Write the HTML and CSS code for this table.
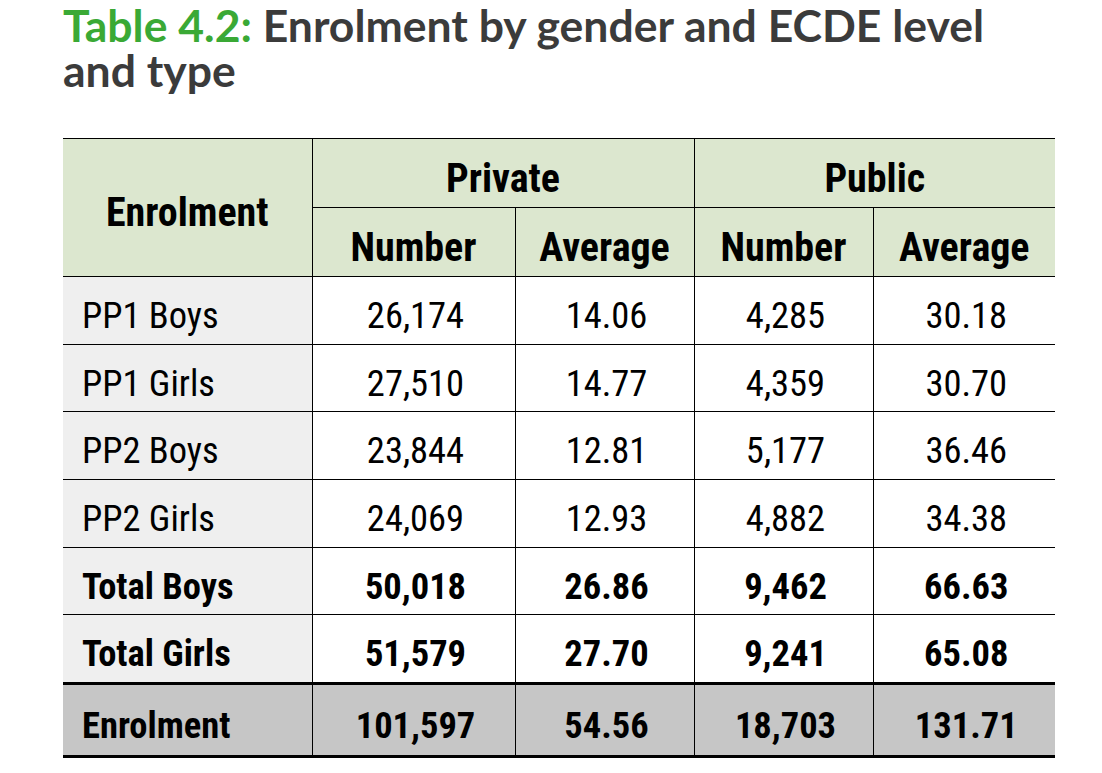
FILE: index.html
```html
<!DOCTYPE html>
<html lang="en">
<head>
<meta charset="utf-8">
<title>Table 4.2</title>
<link rel="stylesheet" href="styles.css">
</head>
<body>
<main class="page">
  <h1 class="title"><span class="title-num">Table 4.2:</span> Enrolment by gender and ECDE level and type</h1>
  <table class="data">
    <colgroup>
      <col class="c1"><col class="c2"><col class="c3"><col class="c4"><col class="c5">
    </colgroup>
    <thead>
      <tr class="h1">
        <th rowspan="2" class="rowhead">Enrolment</th>
        <th colspan="2">Private</th>
        <th colspan="2">Public</th>
      </tr>
      <tr class="h2">
        <th>Number</th><th>Average</th><th>Number</th><th>Average</th>
      </tr>
    </thead>
    <tbody>
      <tr><th class="label">PP1 Boys</th><td>26,174</td><td>14.06</td><td>4,285</td><td>30.18</td></tr>
      <tr><th class="label">PP1 Girls</th><td>27,510</td><td>14.77</td><td>4,359</td><td>30.70</td></tr>
      <tr><th class="label">PP2 Boys</th><td>23,844</td><td>12.81</td><td>5,177</td><td>36.46</td></tr>
      <tr><th class="label">PP2 Girls</th><td>24,069</td><td>12.93</td><td>4,882</td><td>34.38</td></tr>
      <tr class="bold"><th class="label">Total Boys</th><td>50,018</td><td>26.86</td><td>9,462</td><td>66.63</td></tr>
      <tr class="bold"><th class="label">Total Girls</th><td>51,579</td><td>27.70</td><td>9,241</td><td>65.08</td></tr>
      <tr class="bold total"><th class="label">Enrolment</th><td>101,597</td><td>54.56</td><td>18,703</td><td>131.71</td></tr>
    </tbody>
  </table>
</main>
</body>
</html>
```

FILE: styles.css
```css
html, body {
  margin: 0;
  padding: 0;
  background: #ffffff;
}

.page {
  padding: 0 0 0 63px;
}

.title {
  margin: 2px 0 0 0;
  width: 940px;
  font-family: "Lato", "Noto Sans", sans-serif;
  font-weight: 700;
  font-size: 44.5px;
  line-height: 45px;
  color: #3b3b3b;
}

.title-num {
  color: #3aa935;
}

.data {
  margin-top: 46px;
  border-collapse: collapse;
  table-layout: fixed;
  width: 992px;
  font-family: "Roboto Condensed", "Roboto", sans-serif;
  font-stretch: condensed;
  font-size: 36.5px;
  color: #000000;
  border-top: 1px solid #000;
  border-bottom: 3px solid #000;
}

.c1 { width: 249px; }
.c2 { width: 203px; }
.c3 { width: 179px; }
.c4 { width: 179px; }
.c5 { width: 182px; }

.data th,
.data td {
  border: 1px solid #000;
  padding: 10px 0 0 4px;
  text-align: center;
  vertical-align: middle;
}

.data tr > :first-child { border-left: none; }
.data tr > :last-child { border-right: none; }

.data thead th {
  background: #dce7cf;
  font-weight: 700;
  font-size: 40px;
  padding-left: 0;
}

.data thead .h1 th { height: 58px; }
.data thead .h2 th { height: 58px; }
.data thead .rowhead { border-left: none; }

.data tbody th.label {
  background: #efefef;
  text-align: left;
  padding-left: 19px;
  font-weight: 400;
}

.data tbody td,
.data tbody th {
  height: 56.7px;
  font-weight: 400;
}

.data tbody tr.bold th,
.data tbody tr.bold td {
  font-weight: 700;
}

.data tbody tr.total th,
.data tbody tr.total td {
  background: #c6c6c6;
  border-top: 3px solid #000;
  height: 60px;
}
```
